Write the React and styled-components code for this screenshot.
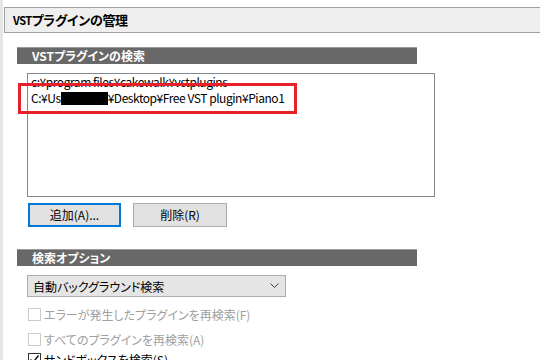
import React from "react";
import styled, { createGlobalStyle } from "styled-components";

const Global = createGlobalStyle`
  html, body { margin: 0; padding: 0; background: #fff; }
  body {
    font-family: "Noto Sans CJK JP", "Liberation Sans", sans-serif;
    font-size: 12px;
    color: #000;
    overflow: hidden;
    font-feature-settings: "palt";
  }
`;

const Page = styled.div`
  display: flex;
  width: 540px;
  height: 360px;
  overflow: hidden;
`;

const SideStrip = styled.div`
  width: 3px;
  flex: none;
  background: #e6e6e6;
`;

const Main = styled.div`
  flex: 1;
  min-width: 0;
  padding-left: 1px;
  padding-top: 7px;
  display: flex;
  flex-direction: column;
  & > * { flex-shrink: 0; }
`;

const PageHeader = styled.div`
  height: 24px;
  margin-right: -4px;
  border: 1px solid #a0a0a0;
  background: #efefef;
  display: flex;
  align-items: center;
  padding-left: 8px;
  font-weight: bold;
  font-size: 13px;
  line-height: 16px;
  letter-spacing: -0.3px;
`;

const Small = styled.span`
  font-size: 11px;
  letter-spacing: -0.5px;
`;

const Section = styled.div`
  margin-left: 13px;
  margin-top: ${(p) => p.$top}px;
  display: flex;
  flex-direction: column;
  align-items: flex-start;
  & > * { flex-shrink: 0; }
`;

const SectionBar = styled.div`
  width: 400px;
  height: 17px;
  border-top: 1px solid #9a9a9a;
  background: #686868;
  color: #fff;
  font-weight: bold;
  font-size: 12px;
  line-height: 16px;
  padding-left: 15px;
  box-sizing: border-box;
`;

const ListBox = styled.div`
  position: relative;
  margin-left: 10px;
  margin-top: 9px;
  width: 408px;
  height: 124px;
  box-sizing: border-box;
  border: 1px solid #828790;
  background: #fff;
  padding: 0 3px;
`;

const ListItem = styled.div`
  font-size: 12px;
  line-height: 16px;
  white-space: nowrap;
  color: #000;
  letter-spacing: -0.45px;
`;

const Redact = styled.span`
  display: inline-block;
  width: 47px;
  height: 13px;
  background: #000;
  vertical-align: -2px;
`;

const Highlight = styled.div`
  position: absolute;
  left: -10px;
  top: 9px;
  width: 279px;
  height: 31px;
  box-sizing: border-box;
  border: 3px solid #e8202a;
  pointer-events: none;
`;

const ButtonRow = styled.div`
  display: flex;
  gap: 12px;
  margin-left: 11px;
  margin-top: 6px;
`;

const Button = styled.button`
  width: ${(p) => p.$w}px;
  height: 24px;
  box-sizing: border-box;
  background: #e1e1e1;
  border: ${(p) => (p.$focus ? "2px solid #0078d7" : "1px solid #adadad")};
  font-family: "Noto Sans CJK JP", sans-serif;
  font-feature-settings: "palt";
  font-size: 12px;
  color: #000;
  padding: 0;
  line-height: 16px;
`;

const Select = styled.div`
  margin-left: 10px;
  margin-top: 9px;
  width: 259px;
  height: 22px;
  box-sizing: border-box;
  border: 1px solid #adadad;
  background: #e5e5e5;
  display: flex;
  align-items: center;
  justify-content: space-between;
  padding: 0 6px 0 5px;
  font-size: 12px;
`;

const CheckList = styled.div`
  margin-left: 11px;
  margin-top: 9px;
  display: flex;
  flex-direction: column;
`;

const CheckRow = styled.div`
  display: flex;
  align-items: center;
  gap: 3px;
  height: 16px;
  margin-top: ${(p) => p.$gap || 0}px;
  font-size: 12px;
  color: ${(p) => (p.$disabled ? "#a0a0a0" : "#000")};
  white-space: nowrap;
`;

const Box = styled.span`
  width: 13px;
  height: 13px;
  box-sizing: border-box;
  border: 1px solid ${(p) => (p.$disabled ? "#cccccc" : "#333")};
  background: #fff;
  display: flex;
  align-items: center;
  justify-content: center;
`;

const Chevron = () => (
  <svg width="9" height="6" viewBox="0 0 9 6">
    <path d="M0.5 0.5 L4.5 4.5 L8.5 0.5" fill="none" stroke="#404040" strokeWidth="1" />
  </svg>
);

const Check = () => (
  <svg width="11" height="11" viewBox="0 0 11 11">
    <path d="M1.5 5.5 L4 8.5 L9.5 1.5" fill="none" stroke="#000" strokeWidth="1.3" />
  </svg>
);

export default function App() {
  return (
    <>
      <Global />
      <Page>
        <SideStrip />
        <Main>
          <PageHeader>
            <Small>VST</Small>プラグインの管理
          </PageHeader>
          <Section $top={14}>
            <SectionBar>VSTプラグインの検索</SectionBar>
            <ListBox>
              <ListItem>c:¥program files¥cakewalk¥vstplugins</ListItem>
              <ListItem>
                C:¥Us<Redact />¥Desktop¥Free VST plugin¥Piano1
              </ListItem>
              <Highlight />
            </ListBox>
            <ButtonRow>
              <Button $w={93} $focus>追加(A)...</Button>
              <Button $w={94}>削除(R)</Button>
            </ButtonRow>
          </Section>
          <Section $top={22}>
            <SectionBar>検索オプション</SectionBar>
            <Select>
              <span>自動バックグラウンド検索</span>
              <Chevron />
            </Select>
            <CheckList>
              <CheckRow $disabled>
                <Box $disabled />
                エラーが発生したプラグインを再検索(F)
              </CheckRow>
              <CheckRow $disabled $gap={9}>
                <Box $disabled />
                すべてのプラグインを再検索(A)
              </CheckRow>
              <CheckRow $gap={4}>
                <Box>
                  <Check />
                </Box>
                サンドボックスを検索(S)
              </CheckRow>
            </CheckList>
          </Section>
        </Main>
      </Page>
    </>
  );
}
